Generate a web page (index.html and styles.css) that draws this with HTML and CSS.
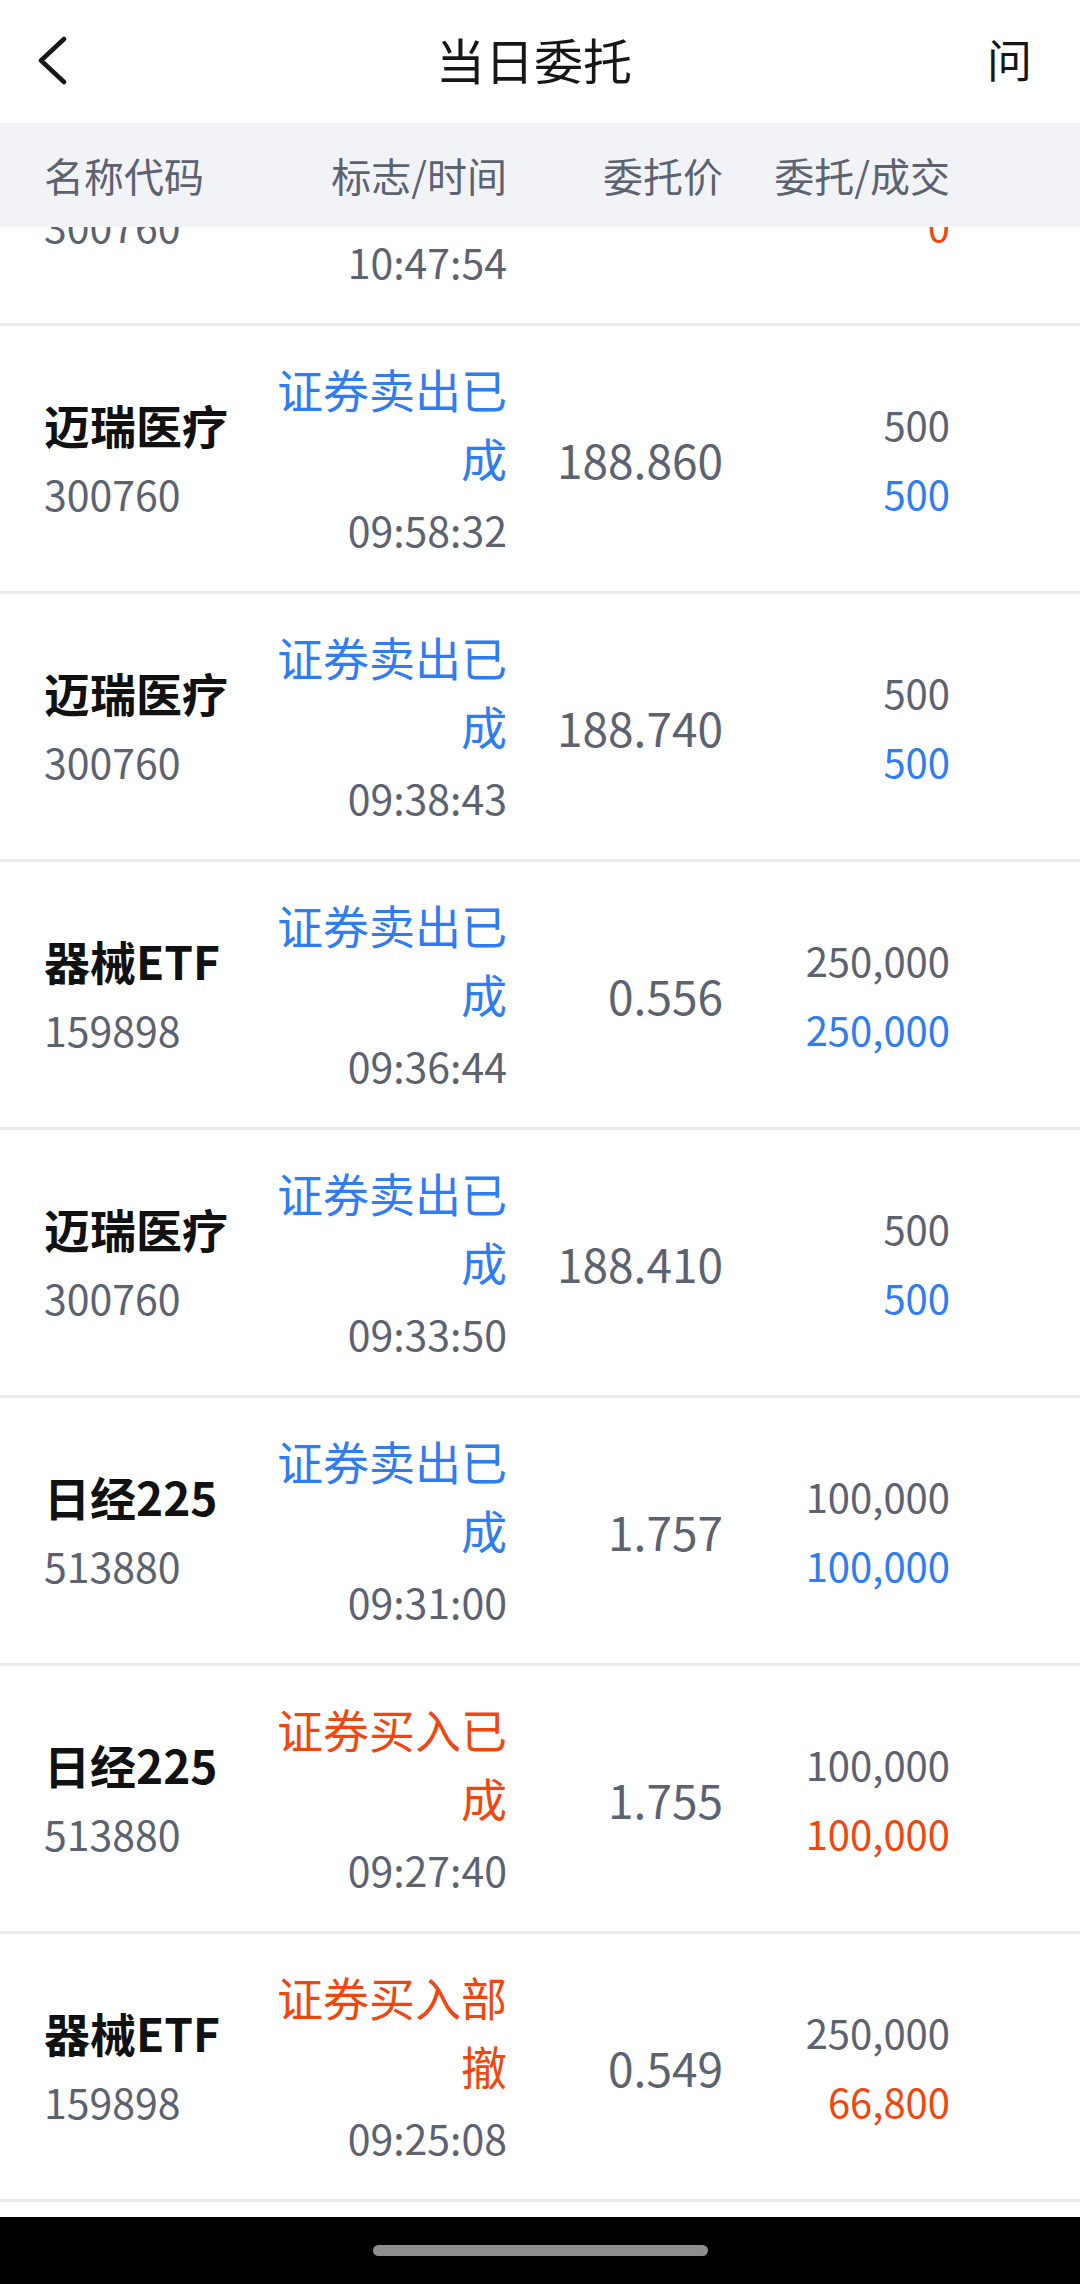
FILE: index.html
```html
<!DOCTYPE html>
<html lang="zh-CN">
<head>
    <meta charset="UTF-8">
    <meta name="viewport" content="width=device-width, initial-scale=1.0">
    <title>当日委托</title>
    <link rel="stylesheet" href="styles.css">
</head>
<body>
<div class="page">
    <div class="top-bar">
        <div class="back">
            <svg width="34" height="52" viewBox="0 0 34 52">
                <path d="M28 3 L5 24.5 L28 46" fill="none" stroke="#161616" stroke-width="4.5" stroke-linecap="round" stroke-linejoin="round"/>
            </svg>
        </div>
        <div class="title">当日委托</div>
        <div class="ask">问</div>
    </div>

    <div class="table-head">
        <div>名称代码</div>
        <div class="right">标志/时间</div>
        <div class="right">委托价</div>
        <div class="right">委托/成交</div>
    </div>

    <div class="list">
        <div class="rows">
            <div class="row">
                <div class="name-cell">
                    <div class="name">迈瑞医疗</div>
                    <div class="code">300760</div>
                </div>
                <div class="flag-cell">
                    <div class="flag buy">证券买入已撤</div>
                    <div class="time">10:47:54</div>
                </div>
                <div class="price">188.200</div>
                <div class="qty-cell">
                    <div class="qty">500</div>
                    <div class="qty buy">0</div>
                </div>
            </div>

            <div class="row">
                <div class="name-cell">
                    <div class="name">迈瑞医疗</div>
                    <div class="code">300760</div>
                </div>
                <div class="flag-cell">
                    <div class="flag sell">证券卖出已成</div>
                    <div class="time">09:58:32</div>
                </div>
                <div class="price">188.860</div>
                <div class="qty-cell">
                    <div class="qty">500</div>
                    <div class="qty sell">500</div>
                </div>
            </div>

            <div class="row">
                <div class="name-cell">
                    <div class="name">迈瑞医疗</div>
                    <div class="code">300760</div>
                </div>
                <div class="flag-cell">
                    <div class="flag sell">证券卖出已成</div>
                    <div class="time">09:38:43</div>
                </div>
                <div class="price">188.740</div>
                <div class="qty-cell">
                    <div class="qty">500</div>
                    <div class="qty sell">500</div>
                </div>
            </div>

            <div class="row">
                <div class="name-cell">
                    <div class="name">器械ETF</div>
                    <div class="code">159898</div>
                </div>
                <div class="flag-cell">
                    <div class="flag sell">证券卖出已成</div>
                    <div class="time">09:36:44</div>
                </div>
                <div class="price">0.556</div>
                <div class="qty-cell">
                    <div class="qty">250,000</div>
                    <div class="qty sell">250,000</div>
                </div>
            </div>

            <div class="row">
                <div class="name-cell">
                    <div class="name">迈瑞医疗</div>
                    <div class="code">300760</div>
                </div>
                <div class="flag-cell">
                    <div class="flag sell">证券卖出已成</div>
                    <div class="time">09:33:50</div>
                </div>
                <div class="price">188.410</div>
                <div class="qty-cell">
                    <div class="qty">500</div>
                    <div class="qty sell">500</div>
                </div>
            </div>

            <div class="row">
                <div class="name-cell">
                    <div class="name">日经225</div>
                    <div class="code">513880</div>
                </div>
                <div class="flag-cell">
                    <div class="flag sell">证券卖出已成</div>
                    <div class="time">09:31:00</div>
                </div>
                <div class="price">1.757</div>
                <div class="qty-cell">
                    <div class="qty">100,000</div>
                    <div class="qty sell">100,000</div>
                </div>
            </div>

            <div class="row">
                <div class="name-cell">
                    <div class="name">日经225</div>
                    <div class="code">513880</div>
                </div>
                <div class="flag-cell">
                    <div class="flag buy">证券买入已成</div>
                    <div class="time">09:27:40</div>
                </div>
                <div class="price">1.755</div>
                <div class="qty-cell">
                    <div class="qty">100,000</div>
                    <div class="qty buy">100,000</div>
                </div>
            </div>

            <div class="row">
                <div class="name-cell">
                    <div class="name">器械ETF</div>
                    <div class="code">159898</div>
                </div>
                <div class="flag-cell">
                    <div class="flag buy">证券买入部撤</div>
                    <div class="time">09:25:08</div>
                </div>
                <div class="price">0.549</div>
                <div class="qty-cell">
                    <div class="qty">250,000</div>
                    <div class="qty buy">66,800</div>
                </div>
            </div>

            <div class="row">
                <div class="name-cell">
                    <div class="name">器械ETF</div>
                    <div class="code">159898</div>
                </div>
                <div class="flag-cell">
                    <div class="flag buy">证券买入已成</div>
                    <div class="time">09:20:15</div>
                </div>
                <div class="price">0.548</div>
                <div class="qty-cell">
                    <div class="qty">100,000</div>
                    <div class="qty buy">100,000</div>
                </div>
            </div>
        </div>
    </div>

    <div class="nav-bar">
        <div class="home-pill"></div>
    </div>
</div>
</body>
</html>
```

FILE: styles.css
```css
* {
    box-sizing: border-box;
    margin: 0;
    padding: 0;
}

body {
    width: 1080px;
    height: 2284px;
    overflow: hidden;
    background-color: #ffffff;
    font-family: "Noto Sans CJK SC", "Noto Sans", sans-serif;
    color: #5d6271;
}

.page {
    display: flex;
    flex-direction: column;
    height: 2284px;
}

/* 顶部标题栏 */
.top-bar {
    height: 123px;
    flex-shrink: 0;
    display: grid;
    grid-template-columns: 1fr auto 1fr;
    align-items: center;
    padding: 0 48px 6px 36px;
}

.back svg {
    display: block;
    margin-top: 6px;
}

.title {
    font-size: 49px;
    color: #161616;
    line-height: 1;
}

.ask {
    justify-self: end;
    font-size: 45px;
    color: #161616;
    line-height: 1;
}

/* 表头和行共用一套列 */
.table-head,
.row {
    display: grid;
    grid-template-columns: 213px 250px 216px 227px;
    align-items: center;
    padding: 0 130px 0 44px;
}

.table-head {
    height: 104px;
    flex-shrink: 0;
    background-color: #f2f3f6;
    font-size: 40px;
    color: #5d6271;
}

.right {
    text-align: right;
}

.list {
    flex: 1;
    overflow: hidden;
}

.rows {
    margin-top: -169px;
}

.row {
    height: 268px;
    border-bottom: 3px solid #e8ebef;
}

.name {
    font-size: 46px;
    font-weight: 700;
    color: #111111;
    line-height: 69px;
}

.code {
    font-size: 41px;
    line-height: 69px;
}

.flag-cell {
    text-align: right;
}

.flag {
    font-size: 46px;
    line-height: 69px;
}

.time {
    font-size: 41px;
    line-height: 69px;
    margin-top: 3px;
}

.price {
    font-size: 46px;
    text-align: right;
}

.qty-cell {
    text-align: right;
}

.qty {
    font-size: 40px;
    line-height: 69px;
}

.sell {
    color: #2f7cf3;
}

.buy {
    color: #f0470f;
}

/* 底部手势条 */
.nav-bar {
    height: 67px;
    flex-shrink: 0;
    background-color: #000000;
    display: flex;
    justify-content: center;
    padding-top: 28px;
}

.home-pill {
    width: 335px;
    height: 11px;
    border-radius: 6px;
    background-color: #8e8e8e;
}
```
